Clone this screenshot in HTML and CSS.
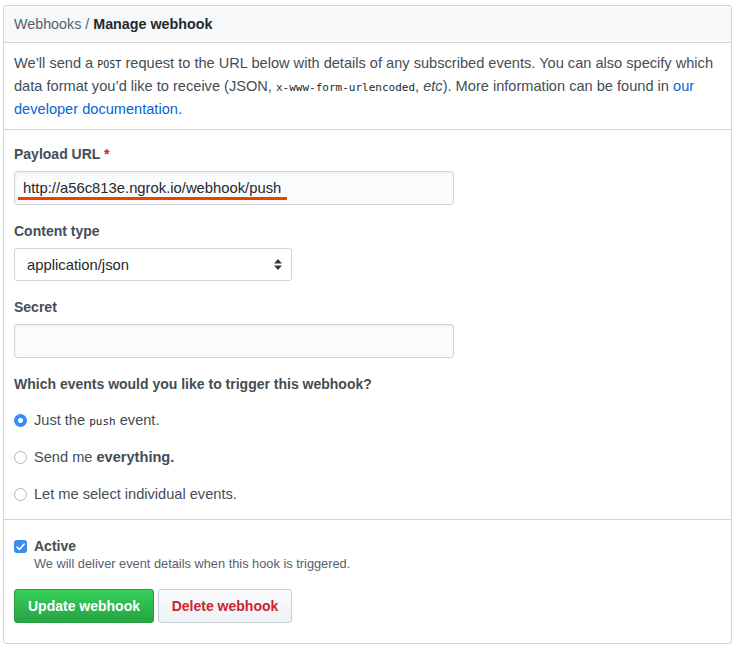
FILE: index.html
```html
<!DOCTYPE html>
<html>
<head>
<meta charset="utf-8">
<link rel="stylesheet" href="styles.css">
</head>
<body>
<div class="box">
  <div class="box-header"><span class="crumb">Webhooks /</span> <strong>Manage webhook</strong></div>
  <div class="intro">
    <p>We’ll send a <code class="sc">POST</code> request to the URL below with details of any subscribed events. You can also specify which data format you’d like to receive (JSON, <code>x-www-form-urlencoded</code>, <em>etc</em>). More information can be found in <a href="#">our developer documentation</a>.</p>
  </div>
  <div class="form-section">
    <div class="group">
      <label class="lbl">Payload URL <span class="req">*</span></label>
      <div class="field-wrap">
        <div class="input">http://a56c813e.ngrok.io/webhook/push</div>
        <span class="underline"></span>
      </div>
    </div>
    <div class="group">
      <label class="lbl">Content type</label>
      <div class="select">
        <span>application/json</span>
        <svg class="arrows" width="8" height="11" viewBox="0 0 8 11"><path d="M4 0 L8 4.5 L0 4.5 Z M4 11 L8 6.5 L0 6.5 Z" fill="#2f363d"/></svg>
      </div>
    </div>
    <div class="group">
      <label class="lbl">Secret</label>
      <div class="input empty"></div>
    </div>
    <div class="lbl question">Which events would you like to trigger this webhook?</div>
    <div class="radios">
      <div class="radio-row"><span class="radio on"></span><span>Just the <code>push</code> event.</span></div>
      <div class="radio-row"><span class="radio"></span><span>Send me <strong>everything.</strong></span></div>
      <div class="radio-row"><span class="radio"></span><span>Let me select individual events.</span></div>
    </div>
  </div>
  <div class="footer">
    <div class="check-row">
      <span class="checkbox"><svg width="9" height="8" viewBox="0 0 9 8"><path d="M1 4.2 L3.5 6.5 L8 1.2" fill="none" stroke="#fff" stroke-width="1.6" stroke-linecap="round" stroke-linejoin="round"/></svg></span>
      <div>
        <div class="active">Active</div>
        <div class="note">We will deliver event details when this hook is triggered.</div>
      </div>
    </div>
    <div class="buttons">
      <button class="btn primary">Update webhook</button>
      <button class="btn danger">Delete webhook</button>
    </div>
  </div>
</div>
</body>
</html>
```
FILE: styles.css
```css
* { box-sizing: border-box; }
body {
  margin: 0;
  background: #fff;
  font-family: "Liberation Sans", Arial, sans-serif;
  font-size: 14.6px;
  color: #24292e;
}
.box {
  margin: 5px 0 0 3px;
  width: 729px;
  height: 639px;
  border: 1px solid #d1d5da;
  border-radius: 3px;
}
.box-header {
  height: 37px;
  background: #f6f8fa;
  border-bottom: 1px solid #d1d5da;
  padding: 8px 0 0 10px;
  line-height: 21px;
  font-size: 14.3px;
  border-radius: 3px 3px 0 0;
}
.crumb { color: #586069; }
.box-header strong { color: #24292e; }
.intro {
  padding: 9px 10px 8px 10px;
  border-bottom: 1px solid #d1d5da;
}
.intro p {
  margin: 0;
  line-height: 23px;
  color: #444d56;
}
code {
  font-family: "DejaVu Sans Mono", "Liberation Mono", monospace;
  font-size: 11px;
  line-height: 1;
  color: #24292e;
}
.sc { font-size: 10px; }
a { color: #0366d6; text-decoration: none; }
.form-section {
  padding: 14px 10px 0 10px;
  height: 390px;
  border-bottom: 1px solid #d1d5da;
}
.group { margin-bottom: 16px; }
.lbl {
  display: block;
  font-weight: bold;
  font-size: 14px;
  line-height: 21px;
  color: #444d56;
  margin-bottom: 6px;
}
.req { color: #cb2431; }
.field-wrap { position: relative; width: 440px; }
.input {
  width: 440px;
  height: 34px;
  background: #fafbfc;
  border: 1px solid #d1d5da;
  border-radius: 3px;
  box-shadow: inset 0 1px 2px rgba(27,31,35,0.075);
  padding: 0 8px;
  line-height: 32px;
  font-size: 14.8px;
  color: #24292e;
}
.underline {
  position: absolute;
  left: 4px;
  top: 26px;
  width: 269px;
  height: 3px;
  background: #f04000;
}
.select {
  width: 278px;
  height: 33px;
  border: 1px solid #d1d5da;
  border-radius: 3px;
  background: #fff;
  display: flex;
  align-items: center;
  justify-content: space-between;
  padding: 0 9px 0 12px;
  font-size: 14.8px;
}
.question { margin: 0 0 15px 0; }
.radios { display: flex; flex-direction: column; gap: 16px; }
.radio-row {
  display: flex;
  align-items: center;
  gap: 7px;
  height: 21px;
  line-height: 21px;
  color: #444d56;
}
.radio-row strong { color: #444d56; }
.radio {
  width: 13px;
  height: 13px;
  border-radius: 50%;
  border: 1px solid #b0b4b9;
  background: #fff;
  flex: none;
}
.radio.on {
  border: none;
  background: radial-gradient(circle, #fff 0 2.2px, #3b8cf0 2.8px);
}
.footer { padding: 17px 10px 0 10px; }
.check-row { display: flex; gap: 7px; align-items: flex-start; }
.checkbox {
  width: 13px;
  height: 13px;
  border-radius: 3px;
  background: #3b8cf0;
  display: flex;
  align-items: center;
  justify-content: center;
  margin-top: 3px;
  flex: none;
}
.active {
  font-weight: bold;
  font-size: 14px;
  line-height: 18px;
  color: #444d56;
}
.note {
  font-size: 12.8px;
  line-height: 18px;
  color: #586069;
}
.buttons { display: flex; gap: 4px; margin-top: 16px; }
.btn {
  height: 34px;
  border-radius: 3px;
  font-family: "Liberation Sans", Arial, sans-serif;
  font-weight: bold;
  font-size: 14px;
  padding: 0 12px;
}
.primary {
  width: 140px;
  color: #fff;
  background: linear-gradient(#34d058, #28a745 90%);
  border: 1px solid #259c3f;
}
.danger {
  width: 134px;
  color: #cb2431;
  background: linear-gradient(#fafbfc, #eff3f6 90%);
  border: 1px solid #c9ced3;
}
```
